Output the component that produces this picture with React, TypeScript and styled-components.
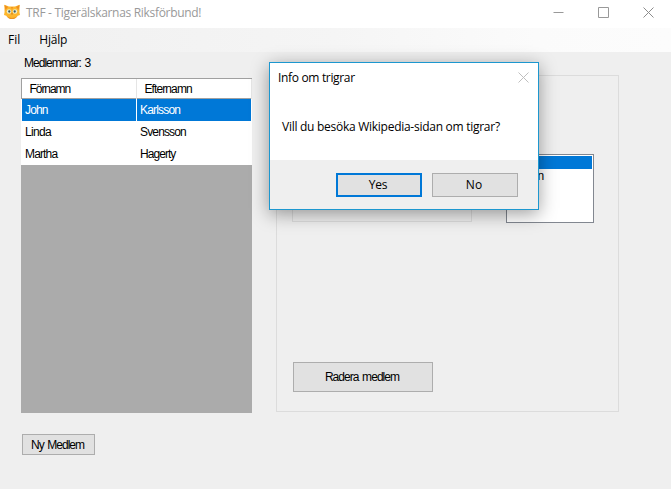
import React from "react";
import styled, { createGlobalStyle } from "styled-components";

const GlobalStyle = createGlobalStyle`
  * { box-sizing: border-box; }
  body { margin: 0; background: #efefef; overflow: hidden; }
  button { padding: 0; font: inherit; color: inherit; }
`;

const SYSTEM_FONT = '"Open Sans", "Noto Sans", sans-serif';
const FORM_FONT = '"Liberation Sans", Arial, sans-serif';

const Text = styled.span<{ $track?: number; $wordGap?: number }>`
  white-space: pre;
  letter-spacing: ${(p) => p.$track ?? 0}px;
  word-spacing: ${(p) => p.$wordGap ?? 0}px;
`;

const Window = styled.div`
  position: relative;
  display: flex;
  flex-direction: column;
  width: 671px;
  height: 489px;
  background: #efefef;
  color: #000;
  font: 12px/14px ${FORM_FONT};
`;

const TitleBar = styled.header`
  display: flex;
  height: 28px;
  padding-left: 4px;
  background: #fff;
  color: #999;
  font: 12px/26px ${SYSTEM_FONT};
`;

const AppIcon = styled.svg`
  width: 16px;
  height: 16px;
  margin: 4px 6px 0 0;
`;

const WindowControls = styled.div`
  display: flex;
  gap: 34px;
  margin: 7px 17px 0 auto;
`;

const Glyph = styled.svg<{ $color: string }>`
  display: block;
  width: 11px;
  height: 11px;
  fill: none;
  stroke: ${(p) => p.$color};
`;

const MenuBar = styled.nav`
  display: flex;
  gap: 19px;
  height: 24px;
  padding-left: 8px;
  background: linear-gradient(90deg, #f0f0f0, #f5f5f5 50%, #fbfbfb 80%, #fcfcfc);
  font: 12px/24px ${SYSTEM_FONT};
`;

const Client = styled.main`
  display: flex;
  flex: 1;
  gap: 24px;
  padding-left: 21px;
`;

const Members = styled.section`
  display: flex;
  flex-direction: column;
  width: 231px;
  padding-top: 4px;
`;

const Count = styled.div`
  height: 22px;
  padding-left: 3px;
`;

const Grid = styled.div`
  height: 335px;
  background: #ababab;
`;

const HeaderRow = styled.div`
  display: grid;
  grid-template-columns: 115px 1fr;
  height: 21px;
  background: #fff;
  border: solid #a0a0a0;
  border-width: 1px 0 1px 1px;
`;

const HeaderCell = styled.div`
  padding-left: 7.5px;
  border-right: 1px solid #e5e5e5;
  line-height: 20px;
`;

const Row = styled.div`
  display: grid;
  grid-template-columns: 114px 114px;
  gap: 1px;
  height: 22px;
  padding: 0 1px 1px;
  background: #fff;
`;

const Cell = styled.div<{ $selected: boolean }>`
  padding-left: 3px;
  background: ${(p) => (p.$selected ? "#0078d7" : "#fff")};
  color: ${(p) => (p.$selected ? "#fff" : "#000")};
  line-height: 22px;
`;

const Button = styled.button<{ $w: number; $h: number; $primary?: boolean }>`
  display: flex;
  align-items: center;
  justify-content: center;
  width: ${(p) => p.$w}px;
  height: ${(p) => p.$h}px;
  padding-right: 2px;
  background: #e1e1e1;
  border: ${(p) => (p.$primary ? "2px solid #0078d7" : "1px solid #adadad")};
`;

const NewMember = styled.div`
  padding: 21px 0 0 1px;
`;

const Details = styled.section`
  display: flex;
  flex-direction: column;
  justify-content: space-between;
  width: 343px;
  height: 337px;
  margin-top: 23px;
  padding: 78px 24px 19px 16px;
  border: 1px solid #dcdcdc;
`;

const DetailsTop = styled.div`
  display: flex;
  justify-content: space-between;
`;

const InnerGroup = styled.div`
  width: 180px;
  height: 68px;
  margin-left: -1px;
  border: 1px solid #dcdcdc;
`;

const ListBox = styled.div`
  width: 88px;
  height: 69px;
  padding: 1px;
  background: #fff;
  border: 1px solid #828790;
`;

const ListItem = styled.div<{ $selected?: boolean }>`
  height: 13px;
  padding-left: 1px;
  line-height: 15px;
  background: ${(p) => (p.$selected ? "#0078d7" : "transparent")};
  color: ${(p) => (p.$selected ? "#fff" : "#000")};
`;

const Dialog = styled.div`
  position: absolute;
  left: 269px;
  top: 62px;
  display: flex;
  flex-direction: column;
  width: 270px;
  height: 148px;
  background: #fff;
  border: 1px solid #1c97cf;
  box-shadow: 0 4px 17px rgba(0, 0, 0, 0.38);
  font: 12px/16px ${SYSTEM_FONT};
`;

const DialogTitle = styled.div`
  display: flex;
  justify-content: space-between;
  height: 30px;
  padding: 7px 9px 0 8px;

  svg { margin-top: 2px; }
`;

const DialogMessage = styled.div`
  flex: 1;
  padding: 26px 0 0 12px;
`;

const DialogActions = styled.div`
  display: flex;
  justify-content: flex-end;
  gap: 10px;
  height: 49px;
  padding: 13px 20px 0 0;
  background: #efefef;
`;

const members = [
  { first: "John", last: "Karlsson", firstTrack: -0.85, lastTrack: -0.82 },
  { first: "Linda", last: "Svensson", firstTrack: -0.7, lastTrack: -0.85 },
  { first: "Martha", last: "Hagerty", firstTrack: -0.85, lastTrack: -0.95 },
];

const CloseGlyph = ({ color }: { color: string }) => (
  <Glyph viewBox="0 0 11 11" $color={color}>
    <path d="M.5.5l10 10M10.5.5l-10 10" />
  </Glyph>
);

const CatIcon = () => (
  <AppIcon viewBox="0 0 16 16">
    <path d="M.3.8L5 2.600h6l4.700-1.800-.3 7.200.6 3-2.200.8C12 14 10 15 8 15s-4-1-5.800-3.200L0 11l.6-3z" fill="#fdb62c" />
    <path d="M.5 1L4 3 1.500 6zM15.500 1L12 3l2.500 3zM7 3h2L8 5.500z" fill="#ee8f20" />
    <path d="M2.500 12.200Q8 15.800 13.500 12.200L11 14.400Q8 15.800 5 14.400z" fill="#e99322" />
    <circle cx="5" cy="7.500" r="2.300" fill="#e9edce" />
    <circle cx="11" cy="7.500" r="2.300" fill="#e9edce" />
    <circle cx="5.300" cy="7.500" r="1.150" fill="#405b60" />
    <circle cx="10.700" cy="7.500" r="1.150" fill="#405b60" />
    <path d="M7 9.500h2L8 10.800z" fill="#b65c20" />
  </AppIcon>
);

export default function App() {
  return (
    <>
      <GlobalStyle />
      <Window>
        <TitleBar>
          <CatIcon />
          <Text $track={-0.31}>TRF - Tigerälskarnas Riksförbund!</Text>
          <WindowControls>
            <Glyph viewBox="0 0 11 11" $color="#999"><path d="M.5 5.500h10" /></Glyph>
            <Glyph viewBox="0 0 11 11" $color="#999"><path d="M.5.5h10v10H.5z" /></Glyph>
            <CloseGlyph color="#8c8c8c" />
          </WindowControls>
        </TitleBar>
        <MenuBar>
          <Text>Fil</Text>
          <Text $track={-0.2}>Hjälp</Text>
        </MenuBar>
        <Client>
          <Members>
            <Count><Text $track={-0.98} $wordGap={1.2}>Medlemmar: 3</Text></Count>
            <Grid>
              <HeaderRow>
                <HeaderCell><Text $track={-1.05}>Förnamn</Text></HeaderCell>
                <HeaderCell><Text $track={-0.9}>Efternamn</Text></HeaderCell>
              </HeaderRow>
              {members.map((m, i) => (
                <Row key={m.first}>
                  <Cell $selected={i === 0}><Text $track={m.firstTrack}>{m.first}</Text></Cell>
                  <Cell $selected={i === 0}><Text $track={m.lastTrack}>{m.last}</Text></Cell>
                </Row>
              ))}
            </Grid>
            <NewMember>
              <Button $w={73} $h={21}><Text $track={-0.98} $wordGap={1.2}>Ny Medlem</Text></Button>
            </NewMember>
          </Members>
          <Details>
            <DetailsTop>
              <InnerGroup />
              <ListBox>
                <ListItem $selected>Leo</ListItem>
                <ListItem><Text $track={-0.98}>Simson</Text></ListItem>
              </ListBox>
            </DetailsTop>
            <Button $w={140} $h={30}><Text $track={-0.95} $wordGap={1.2}>Radera medlem</Text></Button>
          </Details>
        </Client>
        <Dialog role="dialog">
          <DialogTitle>
            <Text $track={-0.33}>Info om trigrar</Text>
            <CloseGlyph color="#bfbfbf" />
          </DialogTitle>
          <DialogMessage><Text $track={-0.27}>Vill du besöka Wikipedia-sidan om tigrar?</Text></DialogMessage>
          <DialogActions>
            <Button $w={86} $h={24} $primary><Text $track={-0.3}>Yes</Text></Button>
            <Button $w={86} $h={24}>No</Button>
          </DialogActions>
        </Dialog>
      </Window>
    </>
  );
}
